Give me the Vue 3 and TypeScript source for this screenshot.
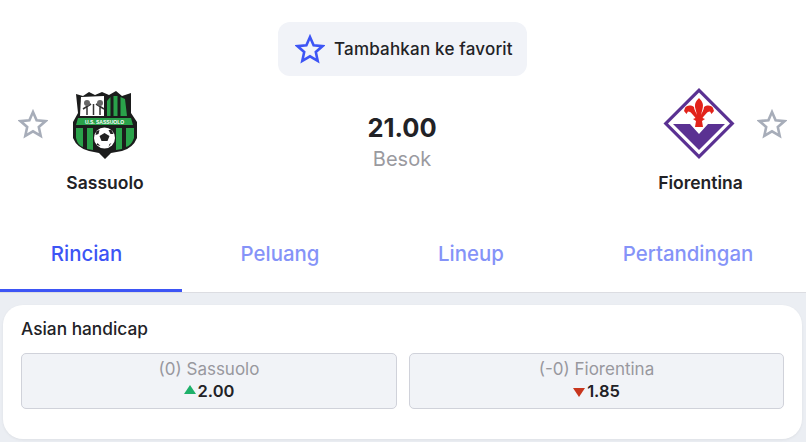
<script setup lang="ts">
const tabs: string[] = ['Rincian', 'Peluang', 'Lineup', 'Pertandingan']
const starPath = 'M15 3 L18.6 11.2 L27.5 12.1 L20.8 18 L22.7 26.8 L15 22.3 L7.3 26.8 L9.2 18 L2.5 12.1 L11.4 11.2 Z'
</script>

<template>
  <div class="page">
    <header class="head">
      <div class="fav-wrap">
        <div class="fav">
          <svg class="fav-star" viewBox="0 0 30 30" width="30" height="30"><path :d="starPath" /></svg>
          <span>Tambahkan ke favorit</span>
        </div>
      </div>

      <div class="match">
        <svg class="star" viewBox="0 0 30 30" width="30" height="30"><path :d="starPath" /></svg>
        <div class="team team-home">
          <svg class="crest" viewBox="72 88 68 72" width="68" height="72">
            <path d="M77 94 L84 96 L90 92 L96 95 L103 92 L110 95 L117 91 L123 96 L132 93 L132 113 L138 122 L138 138 Q134 148 123 151 L112 153 L106 159 L100 153 L90 151 Q78 148 74 138 L74 122 L79 113 Z" fill="#1b1c1c" />
            <path d="M82 97 L105 96 L105 116 L81 116 Z" fill="#fff" />
            <path d="M88 115 L88 107 M101 115 L101 107 M94.500 115 L94.500 104 M84 109 L92 104 M105 109 L97 104" stroke="#333" stroke-width="1.500" />
            <circle cx="88" cy="103" r="3" fill="#666" /><circle cx="101" cy="103" r="3" fill="#666" />
            <path d="M108 101 L111.500 97 L111.500 116 L108 116 Z M114.500 96 L118.500 96 L118.500 116 L114.500 116 Z M121.500 97 L126 99 L128 116 L121.500 116 Z" fill="#2aa24a" />
            <path d="M79 118 L132 118 L134 125 L77 125 Z" fill="#2aa24a" />
            <text x="105.500" y="124" class="crest-txt" text-anchor="middle">U.S. SASSUOLO</text>
            <path d="M77 128 L84 128 L84 147 Q79 146 77 138 Z M88 128 L94 128 L94 150 L88 149 Z M117 128 L123 128 L123 149 L117 150 Z M127 128 L135 128 L135 138 Q132 146 127 147 Z" fill="#2aa24a" />
            <circle cx="105.500" cy="138" r="10.500" fill="#fff" />
            <path d="M105.500 133 L110.500 136 L108.500 141 L102.500 141 L100.500 136 Z M97.500 131 L100.500 130 L99.500 134 L96.500 135 Z M112.500 130 L114.500 134 L111.500 134 L109.500 130 Z M98.500 143 L101.500 146 L97.500 145 Z M110.500 144 L112.500 143 L109.500 147 Z" fill="#222" />
          </svg>
          <div class="name">Sassuolo</div>
        </div>

        <div class="center">
          <div class="time">21.00</div>
          <div class="day">Besok</div>
        </div>

        <div class="team team-away">
          <svg class="crest" viewBox="664 88 72 72" width="72" height="72">
            <path d="M700 88 L735.500 123.500 L700 159 L664.500 123.500 Z" fill="#5a3192" />
            <path d="M700 92.500 L731 123.500 L700 154.500 L669 123.500 Z" fill="#fff" />
            <path d="M674 124 L691 124 L700 134 L709 124 L726 124 L700 150 Z" fill="#5a3192" />
            <path d="M700 98 C703 101 705 104 703.500 109 L702 115 C703 112 705 110 705 107 C709 104 713 106 714 108 L715 111 L712.500 114 L711 111.500 C708 111.500 706 115 703.500 118 L706 119 L703 121 L704 127 L696 127 L697 121 L694 119 L696.500 118 C694 115 692 111.500 689 111.500 L687.500 114 L685 111 L686 108 C687 106 691 104 695 107 C695 110 697 112 698 115 L696.500 109 C695 104 697 101 700 98 Z" fill="#e2231a" />
          </svg>
          <div class="name">Fiorentina</div>
        </div>
        <svg class="star" viewBox="0 0 30 30" width="30" height="30"><path :d="starPath" /></svg>
      </div>

      <nav class="tabs">
        <div v-for="(tab, i) in tabs" :key="tab" class="tab" :class="['tab-' + i, { active: i === 0 }]">{{ tab }}</div>
      </nav>
    </header>

    <section class="card">
      <h2 class="title">Asian handicap</h2>
      <div class="odds">
        <div class="odd">
          <div class="label">(0) Sassuolo</div>
          <div class="value"><span class="tri up"></span>2.00</div>
        </div>
        <div class="odd">
          <div class="label">(-0) Fiorentina</div>
          <div class="value"><span class="tri down"></span>1.85</div>
        </div>
      </div>
    </section>
  </div>
</template>

<style>
html, body { margin: 0; background: #ebeef3; }
</style>

<style scoped>
.page {
  width: 806px;
  height: 442px;
  overflow: hidden;
  background: #ebeef3;
  font-family: Inter, "Noto Sans", sans-serif;
  color: #222226;
}
.head {
  background: #fff;
  height: 293px;
  box-sizing: border-box;
  border-bottom: 1px solid #dcdde2;
  padding-top: 22px;
}
.fav-wrap { display: flex; justify-content: center; padding-right: 1px; }
.fav {
  display: flex;
  align-items: center;
  gap: 9px;
  height: 54px;
  width: 249px;
  box-sizing: border-box;
  padding-left: 17px;
  background: #f1f3f8;
  border-radius: 12px;
  font-size: 17px;
  letter-spacing: .2px;
  font-weight: 500;
}
.fav-star path { fill: none; stroke: #3d55f5; stroke-width: 2.6; stroke-linejoin: miter; }
.match {
  display: flex;
  margin-top: 12px;
  padding: 0 19px 0 18px;
  height: 120px;
}
.star { margin-top: 21px; flex: none; }
.star path { fill: none; stroke: #a7adb9; stroke-width: 2.6; }
.team { width: 116px; display: flex; flex-direction: column; align-items: center; flex: none; box-sizing: border-box; }
.team-home { margin-left: -1px; }
.team-away { padding-left: 3px; }
.team-away .crest { margin-left: -3px; }
.crest { display: block; flex: none; }
.crest-txt { font-size: 5px; font-weight: 700; fill: #fff; font-family: "Liberation Sans", sans-serif; }
.name { margin-top: 13px; font-size: 17.5px; font-weight: 600; line-height: 20px; }
.center { flex: 1; display: flex; flex-direction: column; align-items: center; padding-top: 24px; }
.time { font-size: 25.5px; font-weight: 700; line-height: 32px; }
.day { font-size: 20px; line-height: 24px; color: #9a9a9f; margin-top: 3px; }
.tabs {
  display: grid;
  grid-template-columns: 182px 196px 186px 242px;
  margin-top: 9px;
  height: 75px;
}
.tab {
  display: flex;
  align-items: center;
  justify-content: center;
  box-sizing: border-box;
  font-size: 20.4px;
  font-weight: 500;
  color: #8593f8;
  border-bottom: 3px solid transparent;
}
.tab-0 { padding-right: 9px; }
.tab-3 { padding-left: 6px; }
.tab.active { color: #3d55f5; border-bottom-color: #3d55f5; }
.card {
  margin: 12px 4px 0 3px;
  height: 134px;
  box-sizing: border-box;
  background: #fff;
  border-radius: 20px;
  padding: 13px 18px 0;
  box-shadow: 0 1px 3px rgba(0, 0, 0, .06);
}
.title { margin: 0; font-size: 17.3px; font-weight: 500; line-height: 22px; }
.odds { display: grid; grid-template-columns: 376px 375px; gap: 12px; margin-top: 13px; }
.odd {
  height: 56px;
  box-sizing: border-box;
  background: #f1f3f7;
  border: 1px solid #d0d2da;
  border-radius: 5px;
  text-align: center;
  padding-top: 5px;
}
.label { font-size: 17px; line-height: 20px; color: #98989e; }
.value {
  display: flex;
  align-items: center;
  justify-content: center;
  gap: 2px;
  font-size: 16.5px;
  font-weight: 600;
  line-height: 24px;
}
.tri { width: 0; height: 0; border-left: 6px solid transparent; border-right: 6px solid transparent; }
.tri.up { border-bottom: 9px solid #1eb06a; margin-bottom: 3px; }
.tri.down { border-top: 9px solid #c8361e; margin-top: 2px; }
</style>
